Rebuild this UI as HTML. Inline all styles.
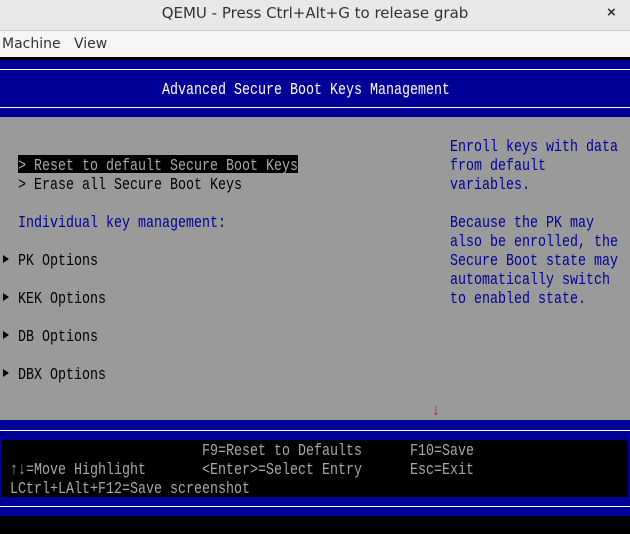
<!DOCTYPE html>
<html><head><meta charset="utf-8"><style>
*{margin:0;padding:0;box-sizing:border-box}
body{width:630px;height:534px;overflow:hidden;background:#000;position:relative;font-family:"Liberation Sans","DejaVu Sans",sans-serif}
.a{position:absolute}
.t{position:absolute;font-family:"Liberation Mono",monospace;font-size:13.33px;line-height:19px;white-space:pre;height:19px;transform:scaleY(1.25);transform-origin:0 4px}
.b{color:#000098}.k{color:#000}.g{color:#a8a8a8}.w{color:#fff}
.tri{position:absolute;width:0;height:0;border-left:6px solid #000;border-top:4px solid transparent;border-bottom:4px solid transparent;left:3px}
</style></head><body>
<div class="a" style="left:0;top:0;width:630px;height:31px;background:#e8e8e7;border-bottom:1px solid #cfcfcd"></div>
<div class="a" style="left:0;top:3px;width:630px;text-align:center;font-size:15px;color:#2e3436;line-height:20px;font-family:'DejaVu Sans',sans-serif">QEMU - Press Ctrl+Alt+G to release grab</div>
<div class="a" style="left:607px;top:3px;font-size:15px;color:#2e3436;font-weight:bold;line-height:20px">×</div>
<div class="a" style="left:0;top:31px;width:630px;height:26px;background:#f6f5f4"></div>
<div class="a" style="left:2px;top:35px;font-size:14px;color:#2e3436;line-height:18px;font-family:'DejaVu Sans',sans-serif">Machine&nbsp;&nbsp;&nbsp;View</div>
<div class="a" style="left:0;top:60px;width:630px;height:57px;background:#000098"></div>
<div class="a" style="left:0;top:69px;width:630px;height:1px;background:#fff"></div>
<div class="a" style="left:0;top:107px;width:630px;height:1px;background:#fff"></div>
<div class="t w" style="left:162px;top:80px">Advanced Secure Boot Keys Management</div>
<div class="a" style="left:0;top:117px;width:630px;height:303px;background:#9a9a9a"></div>
<div class="a" style="left:18px;top:155px;width:280px;height:18px;background:#000"></div>
<div class="t g" style="left:18px;top:156px">&gt; Reset to default Secure Boot Keys</div>
<div class="t k" style="left:18px;top:175px">&gt; Erase all Secure Boot Keys</div>
<div class="t b" style="left:18px;top:213px">Individual key management:</div>
<div class="tri" style="top:255px"></div>
<div class="tri" style="top:293px"></div>
<div class="tri" style="top:331px"></div>
<div class="tri" style="top:369px"></div>
<div class="t k" style="left:18px;top:251px">PK Options</div>
<div class="t k" style="left:18px;top:289px">KEK Options</div>
<div class="t k" style="left:18px;top:327px">DB Options</div>
<div class="t k" style="left:18px;top:365px">DBX Options</div>
<div class="t b" style="left:450px;top:137px">Enroll keys with data</div>
<div class="t b" style="left:450px;top:156px">from default</div>
<div class="t b" style="left:450px;top:175px">variables.</div>
<div class="t b" style="left:450px;top:213px">Because the PK may</div>
<div class="t b" style="left:450px;top:232px">also be enrolled, the</div>
<div class="t b" style="left:450px;top:251px">Secure Boot state may</div>
<div class="t b" style="left:450px;top:270px">automatically switch</div>
<div class="t b" style="left:450px;top:289px">to enabled state.</div>
<div class="t" style="left:432px;top:401px;color:#e00000;font-weight:bold">↓</div>
<div class="a" style="left:0;top:420px;width:630px;height:96px;background:#000098"></div>
<div class="a" style="left:0;top:430px;width:630px;height:1px;background:#fff"></div>
<div class="a" style="left:0;top:506px;width:630px;height:1px;background:#fff"></div>
<div class="a" style="left:2px;top:440px;width:626px;height:57px;background:#000"></div>
<div class="t g" style="left:202px;top:441px">F9=Reset to Defaults</div>
<div class="t g" style="left:410px;top:441px">F10=Save</div>
<div class="t g" style="left:10px;top:460px">↑↓=Move Highlight</div>
<div class="t g" style="left:202px;top:460px">&lt;Enter&gt;=Select Entry</div>
<div class="t g" style="left:410px;top:460px">Esc=Exit</div>
<div class="t g" style="left:10px;top:479px">LCtrl+LAlt+F12=Save screenshot</div>
</body></html>
